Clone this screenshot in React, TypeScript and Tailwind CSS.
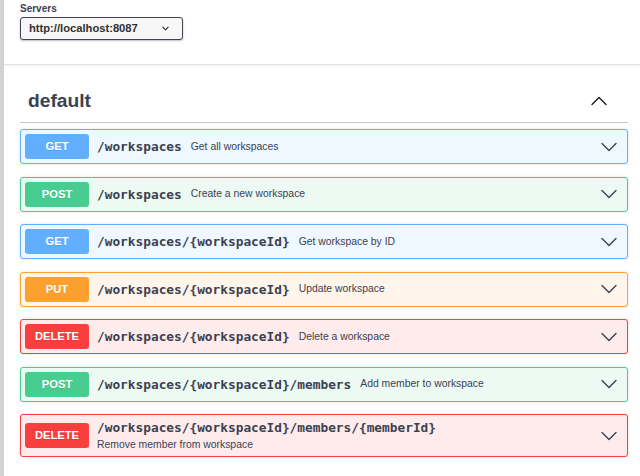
import React from "react";

type Op = {
  method: "GET" | "POST" | "PUT" | "DELETE";
  path: string;
  summary: string;
  stacked?: boolean;
};

const ops: Op[] = [
  { method: "GET", path: "/workspaces", summary: "Get all workspaces" },
  { method: "POST", path: "/workspaces", summary: "Create a new workspace" },
  { method: "GET", path: "/workspaces/{workspaceId}", summary: "Get workspace by ID" },
  { method: "PUT", path: "/workspaces/{workspaceId}", summary: "Update workspace" },
  { method: "DELETE", path: "/workspaces/{workspaceId}", summary: "Delete a workspace" },
  { method: "POST", path: "/workspaces/{workspaceId}/members", summary: "Add member to workspace" },
  {
    method: "DELETE",
    path: "/workspaces/{workspaceId}/members/{memberId}",
    summary: "Remove member from workspace",
    stacked: true,
  },
];

const styles = {
  GET: { box: "border-[#61affe] bg-[#eff7ff]", badge: "bg-[#61affe]" },
  POST: { box: "border-[#49cc90] bg-[#edfaf4]", badge: "bg-[#49cc90]" },
  PUT: { box: "border-[#fca130] bg-[#fff5ea]", badge: "bg-[#fca130]" },
  DELETE: { box: "border-[#f93e3e] bg-[#feecec]", badge: "bg-[#f93e3e]" },
};

function Chevron({ up = false, className = "" }: { up?: boolean; className?: string }) {
  return (
    <svg viewBox="0 0 16 16" className={className} fill="none">
      <polyline
        points={up ? "1,11.5 8,4.5 15,11.5" : "1,4.5 8,11.5 15,4.5"}
        stroke="currentColor"
        strokeWidth="1.4"
        strokeLinecap="round"
        strokeLinejoin="round"
      />
    </svg>
  );
}

function OpBlock({ op }: { op: Op }) {
  const s = styles[op.method];
  return (
    <div
      className={`flex items-center border rounded-[3px] p-[4px] shadow-[0_0_3px_rgba(0,0,0,0.12)] ${s.box}`}
    >
      <div
        className={`w-[64px] h-[25px] shrink-0 rounded-[3px] flex items-center justify-center text-white font-bold text-[11.2px] [text-shadow:0_1px_0_rgba(0,0,0,0.1)] ${s.badge}`}
      >
        {op.method}
      </div>
      {op.stacked ? (
        <div className="flex flex-col ml-[8px] flex-1">
          <span className="font-['DejaVu_Sans_Mono',monospace] font-bold text-[12.8px] leading-[18px] text-[#3b4151]">
            {op.path}
          </span>
          <span className="text-[10.4px] leading-[15px] text-[#3b4151]">{op.summary}</span>
        </div>
      ) : (
        <div className="flex items-center flex-1 ml-[8px]">
          <span className="font-['DejaVu_Sans_Mono',monospace] font-bold text-[12.8px] leading-[17px] text-[#3b4151]">
            {op.path}
          </span>
          <span className="ml-[9px] text-[10.4px] leading-[14px] text-[#3b4151]">{op.summary}</span>
        </div>
      )}
      <Chevron className="w-[16px] h-[16px] mr-[6px] text-[#3b4151]" />
    </div>
  );
}

export default function App() {
  return (
    <div className="flex min-h-screen bg-white font-['Liberation_Sans',Arial,sans-serif]">
      <div className="w-[4px] shrink-0 bg-[#d3d3d3]" />
      <div className="flex-1">
        {/* servers */}
        <div className="pl-[16px] pt-[3px] pb-[24px] border-b border-[#e4e4e4] shadow-[0_1px_2px_rgba(0,0,0,0.06)]">
          <div className="text-[10px] leading-[12px] font-bold text-[#3b4151]">Servers</div>
          <div className="mt-[2px] w-[163px] h-[23px] flex items-center justify-between pl-[8px] pr-[13px] bg-[#f7f7f7] border-[1.5px] border-[#41444e] rounded-[3px] shadow-[0_1px_2px_rgba(0,0,0,0.25)]">
            <span className="text-[11.2px] font-bold text-[#303030]">http://localhost:8087</span>
            <svg viewBox="0 0 8 5" className="w-[7px] h-[5px]" fill="none">
              <polyline points="1,1 4,4 7,1" stroke="#303030" strokeWidth="1.4" strokeLinecap="round" strokeLinejoin="round" />
            </svg>
          </div>
        </div>

        {/* tag section */}
        <div className="pl-[16px] pr-[12px]">
          <div className="mt-[24px] flex items-center justify-between pl-[8px] pr-[21px] pb-[9px] border-b border-[#c4c6cb]">
            <h3 className="text-[19.2px] leading-[24px] font-bold text-[#3b4151]">default</h3>
            <Chevron up className="w-[16px] h-[16px] text-[#1b1b1b]" />
          </div>
          <div className="mt-[6px] flex flex-col gap-[12.5px]">
            {ops.map((op, i) => (
              <OpBlock key={i} op={op} />
            ))}
          </div>
        </div>
      </div>
    </div>
  );
}
